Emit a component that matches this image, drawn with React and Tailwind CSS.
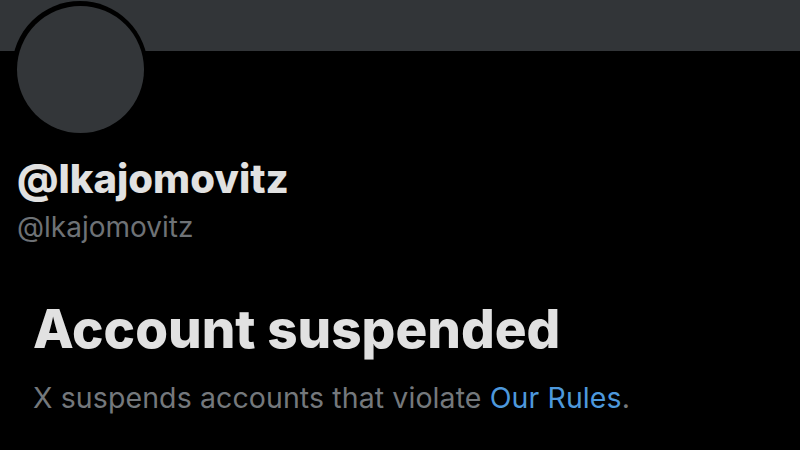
export default function App() {
  return (
    <div className="w-[800px] h-[450px] bg-black overflow-hidden" style={{ fontFamily: "Inter, 'Liberation Sans', sans-serif" }}>
      <div className="h-[51px] w-full bg-[#323538]" />
      <div className="relative -mt-[50px] ml-[12px] w-[136px] h-[136px] rounded-full bg-black flex items-center justify-center">
        <div className="w-[127px] h-[127px] rounded-full bg-[#333639]" />
      </div>
      <div className="pl-[17px] mt-[18px]">
        <div className="text-[40px] leading-[48px] font-extrabold text-[#e1e1e1]">@lkajomovitz</div>
        <div className="mt-[7px] text-[28px] leading-[34px] text-[#6e7276]">@lkajomovitz</div>
      </div>
      <div className="pl-[33px] mt-[55px]">
        <div className="text-[53px] leading-[60px] font-extrabold text-[#e1e1e1]">Account suspended</div>
        <div className="mt-[22px] text-[28.5px] leading-[34px] tracking-[0.1px] text-[#74787c]">
          X suspends accounts that violate <span className="text-[#4d98dc]">Our Rules</span>.
        </div>
      </div>
    </div>
  );
}
